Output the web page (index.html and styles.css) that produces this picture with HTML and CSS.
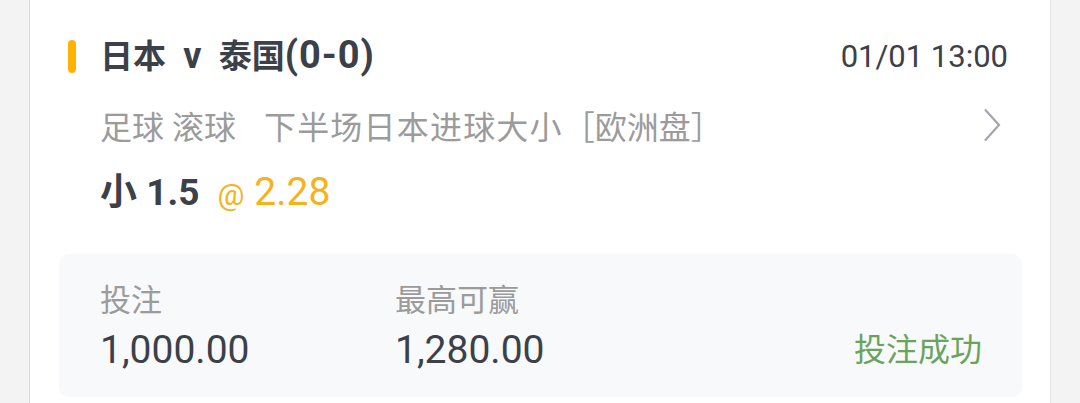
FILE: index.html
```html
<html>
	<head>
		<meta name="viewport" content="width=device-width, initial-scale=1">
		<link rel="stylesheet" href="styles.css">
	</head>
	<body>
		<div class="card">
			<div class="head">
				<span class="mark"></span>
				<span class="title">日本 <span class="vs">v</span> 泰国<span class="score">(0-0)</span></span>
				<span class="time">01/01 13:00</span>
			</div>
			<div class="info">
				<span class="desc">足球 滚球<span class="market">下半场日本进球大小</span><span class="type">［欧洲盘］</span></span>
				<svg class="arrow" width="18" height="34" viewBox="0 0 18 34">
					<path d="M2 1.5 L16 17 L2 32.5" fill="none" stroke="#a3a6ad" stroke-width="2.2" />
				</svg>
			</div>
			<div class="bet">
				<span class="pick">小 1.5</span>
				<span class="at">@</span><span class="odds">2.28</span>
			</div>
			<div class="box">
				<div class="col">
					<div class="label">投注</div>
					<div class="value">1,000.00</div>
				</div>
				<div class="col">
					<div class="label">最高可赢</div>
					<div class="value">1,280.00</div>
				</div>
				<div class="status">投注成功</div>
			</div>
		</div>
	</body>
</html>
```

FILE: styles.css
```css
* {
	box-sizing: border-box;
}

body
{
	margin: 0;
	background: #f3f3f4;
	font-family: Roboto, "Noto Sans CJK SC", sans-serif;
	color: #3c4049;
}

.card
{
	margin-left: 29px;
	width: 1022px;
	min-height: 403px;
	background: #fff;
	border-left: 1px solid #dadada;
	border-right: 1px solid #e4e4e4;
	padding-top: 36px;
}

.head
{
	display: flex;
	align-items: center;
	height: 40px;
	padding: 0 42px 0 38px;
}

.mark
{
	width: 8px;
	height: 33px;
	border-radius: 4px;
	background: #ffb300;
	margin-right: 24px;
}

.title
{
	flex: 1;
	font-size: 33px;
	font-weight: bold;
	line-height: 40px;
	word-spacing: 9px;
}

.vs
{
	font-size: 36px;
}

.score
{
	font-size: 38px;
	letter-spacing: 1px;
}

.time
{
	font-size: 31px;
}

.info
{
	display: flex;
	align-items: center;
	justify-content: space-between;
	height: 40px;
	margin-top: 29px;
	padding: 0 49px 0 70px;
	color: #9b9b9b;
	font-size: 32px;
}

.market
{
	margin-left: 28px;
	letter-spacing: 1.2px;
}

.bet
{
	display: flex;
	align-items: baseline;
	height: 40px;
	margin-top: 17px;
	padding-left: 70px;
}

.pick
{
	font-size: 37px;
	font-weight: bold;
	margin-right: 18px;
}

.at
{
	color: #f5b21b;
	font-size: 30px;
	margin-right: 10px;
}

.odds
{
	color: #f5b21b;
	font-size: 39px;
}

.box
{
	display: flex;
	align-items: flex-end;
	margin: 52px 28px 0 29px;
	padding: 27px 40px 25px 41px;
	background: #f8f9fb;
	border-radius: 10px;
}

.col
{
	width: 295px;
}

.label
{
	color: #9b9b9b;
	font-size: 31px;
	line-height: 40px;
}

.value
{
	margin-top: 7px;
	font-size: 39px;
	line-height: 44px;
}

.status
{
	margin-left: auto;
	color: #6aa35c;
	font-size: 32px;
	line-height: 44px;
}
```
